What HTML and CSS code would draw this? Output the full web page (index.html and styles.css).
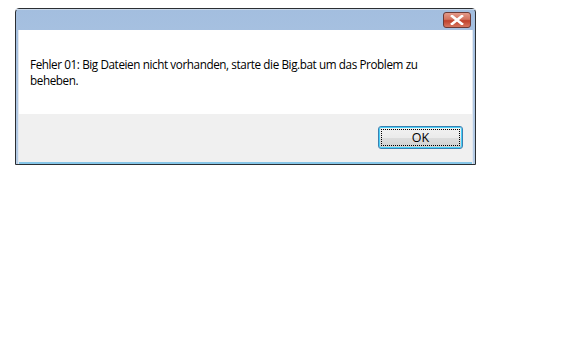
FILE: index.html
```html
<!DOCTYPE html>
<html>
<head>
<meta charset="utf-8">
<link rel="stylesheet" href="styles.css">
</head>
<body>
<div class="dialog">
  <div class="titlebar">
    <div class="close">
      <svg width="14" height="10" viewBox="0 0 14 10"><path d="M2 1 L12 9 M12 1 L2 9" stroke="#fff" stroke-width="2.6" stroke-linecap="square"/></svg>
    </div>
  </div>
  <div class="frame">
    <div class="content">
      <p class="msg">Fehler 01: Big Dateien nicht vorhanden, starte die Big.bat um das Problem zu beheben.</p>
    </div>
    <div class="footer">
      <button class="ok"><span class="focus">OK</span></button>
    </div>
  </div>
</div>
</body>
</html>
```
FILE: styles.css
```css
html, body { margin: 0; background: #fff; }
body { padding: 8px 0 0 15px; font-family: "Open Sans", "Noto Sans", sans-serif; }
.dialog {
  width: 459px;
  height: 155px;
  border: 1px solid #2b2f33;
  border-radius: 4px 4px 0 0;
  background: linear-gradient(#a3bedf, #b7cde6);
  display: flex;
  flex-direction: column;
}
.titlebar {
  height: 21px;
  display: flex;
  justify-content: flex-end;
  align-items: flex-start;
  padding: 2px 4px 0 0;
  box-sizing: border-box;
  border-top: 1px solid #c9d8ea;
}
.close {
  width: 28px;
  height: 16px;
  border: 1px solid #6b3a36;
  border-radius: 3px;
  box-sizing: border-box;
  background: linear-gradient(#e49a8a 0%, #d2735f 45%, #c0412b 55%, #d6765f 100%);
  display: flex;
  align-items: center;
  justify-content: center;
}
.frame {
  flex: 1;
  margin: 0 2px 0 2px;
  border-left: 1px solid #e2e8ef;
  border-right: 1px solid #e2e8ef;
  display: flex;
  flex-direction: column;
}
.content {
  background: #fff;
  height: 84px;
  box-sizing: border-box;
  padding: 26px 8px 0 11px;
}
.msg {
  margin: 0;
  font-size: 11.7px;
  letter-spacing: -0.4px;
  line-height: 16px;
  color: #000;
}
.footer {
  flex: 1;
  background: #f0f0f0;
  border-bottom: 2px solid #86c6e8;
  display: flex;
  justify-content: flex-end;
  align-items: flex-start;
  padding: 12px 9px 0 0;
}
.ok {
  width: 85px;
  height: 23px;
  border: 1px solid #3c7fb1;
  border-radius: 3px;
  background: linear-gradient(#f2f2f2 0%, #ebebeb 50%, #dddddd 51%, #cfcfcf 100%);
  padding: 2px;
  box-shadow: inset 0 0 0 1px #48d0f8;
  font-family: "Open Sans", "Noto Sans", sans-serif;
  font-size: 12.5px;
  color: #000;
  display: flex;
}
.focus {
  flex: 1;
  border: 1px dotted #000;
  display: flex;
  align-items: center;
  justify-content: center;
}
```
